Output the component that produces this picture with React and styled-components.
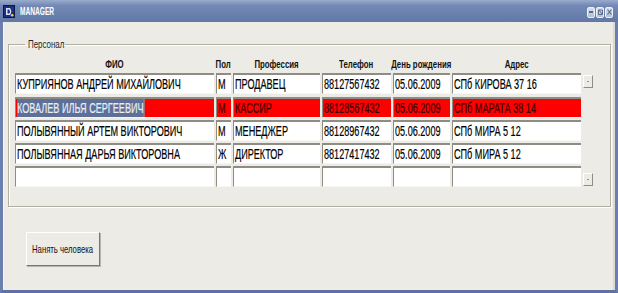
import React from 'react'
import styled, { createGlobalStyle } from 'styled-components'

const GlobalStyle = createGlobalStyle`
  html, body {
    margin: 0;
    padding: 0;
    background: #ecebe5;
  }
  body {
    font-family: "Liberation Sans", Arial, sans-serif;
  }
`

// the old form is drawn with a tall narrow face, so text is squeezed sideways
const Narrow = styled.span`
  display: inline-block;
  white-space: nowrap;
  transform: scaleX(${p => p.$scale || 0.7});
  transform-origin: ${p => p.$origin || 'left'} center;
`

const Window = styled.div`
  width: 618px;
  height: 293px;
  display: flex;
  flex-direction: column;
  overflow: hidden;
`

const TitleBar = styled.div`
  height: 22px;
  flex: none;
  display: flex;
  align-items: center;
  padding: 0 5px 0 3px;
  box-sizing: border-box;
  background: linear-gradient(#9aabcb 0%, #7489b5 25%, #687eac 70%, #6177a6 100%);
`

const TitleText = styled(Narrow)`
  margin-left: 5px;
  color: #fff;
  font-size: 11px;
  font-weight: bold;
`

const TitleButtons = styled.div`
  margin-left: auto;
  display: flex;
  gap: 1px;
  margin-top: 2px;
`

const TitleButton = styled.div`
  width: 8px;
  height: 11px;
  box-sizing: border-box;
  border: 1px solid #eef1f7;
  border-radius: 2px;
  background: linear-gradient(#d9dfeb, #b3bed4);
  display: flex;
  align-items: center;
  justify-content: center;
`

const Frame = styled.div`
  flex: 1;
  display: flex;
  flex-direction: column;
  align-items: flex-start;
  background: #ecebe5;
  border-left: 3px solid #6a7fad;
  border-right: 3px solid #6a7fad;
  border-bottom: 3px solid #5d72a2;
  box-shadow: inset 1px 0 #f6f5f0, inset -2px 0 #dcdbd3;
`

const Group = styled.fieldset`
  align-self: stretch;
  margin: 16px 4px 0 5px;
  padding: 7px 0 19px 6px;
  border: 1px solid #b1afa2;
  box-shadow: inset 1px 1px #fff, 1px 1px #fff;
  min-width: 0;
`

const Legend = styled.legend`
  margin-left: 10px;
  padding: 0 3px;
  width: 34px;
  font-size: 11px;
  line-height: 12px;
  color: #222;
`

const Grid = styled.div`
  display: grid;
  grid-template-columns: 199px 15px 87px 69px 57px 129px 10px;
  grid-template-rows: 14px repeat(5, 21px);
  column-gap: 2px;
  row-gap: 2.25px;
`

const Head = styled.div`
  display: flex;
  align-items: center;
  justify-content: center;
  white-space: nowrap;
  font-size: 11.5px;
  font-weight: bold;
  color: #111;
`

const Cell = styled.div`
  box-sizing: border-box;
  display: flex;
  align-items: stretch;
  padding-left: 1px;
  border-top: 2px solid #8d8c85;
  border-left: 1px solid #8d8c85;
  border-bottom: 1px solid #f7f6f2;
  background: ${p => (p.$red ? '#ff0000' : '#fff')};
  color: ${p => (p.$red ? '#3a0000' : '#000')};
  font-size: 14px;
  -webkit-text-stroke: 0.2px currentColor;
  overflow: hidden;
`

const CellText = styled(Narrow)`
  display: inline-flex;
  align-items: center;
  padding-right: ${p => (p.$selected ? '0' : '1px')};
  background: ${p => (p.$selected ? '#5e7098' : 'transparent')};
  color: ${p => (p.$selected ? '#e8eef6' : 'inherit')};
  border-right: ${p => (p.$selected ? '1px solid #74c2c6' : 'none')};
`

const ScrollCol = styled.div`
  grid-column: 7;
  grid-row: 2 / span 5;
  display: flex;
  flex-direction: column;
  justify-content: space-between;
  padding: 2px 0 1px;
`

const ScrollButton = styled.div`
  width: 10px;
  height: 13px;
  box-sizing: border-box;
  border-top: 1px solid #fff;
  border-left: 1px solid #fff;
  border-right: 1px solid #8f8d82;
  border-bottom: 1px solid #8f8d82;
  background: #ecebe5;
  display: flex;
  align-items: center;
  justify-content: center;
`

const Dot = styled.div`
  width: 2px;
  height: 1px;
  background: #9a988e;
`

const HireButton = styled.button`
  margin: 25px 0 0 23px;
  width: 74px;
  height: 34px;
  padding: 0;
  display: flex;
  align-items: center;
  justify-content: center;
  background: #ecebe5;
  border-top: 1px solid #fff;
  border-left: 1px solid #fff;
  border-right: 1px solid #7b796e;
  border-bottom: 1px solid #7b796e;
  box-shadow: 1px 1px #b8b6aa;
  font-family: "Liberation Sans", Arial, sans-serif;
  font-size: 11px;
  color: #111;
`

const columns = ['ФИО', 'Пол', 'Профессия', 'Телефон', 'День рождения', 'Адрес']

const people = [
  ['КУПРИЯНОВ АНДРЕЙ МИХАЙЛОВИЧ', 'М', 'ПРОДАВЕЦ', '88127567432', '05.06.2009', 'СПб КИРОВА 37 16'],
  ['КОВАЛЕВ ИЛЬЯ СЕРГЕЕВИЧ', 'М', 'КАССИР', '88128567432', '05.06.2009', 'СПб МАРАТА 38 14'],
  ['ПОЛЫВЯННЫЙ АРТЕМ ВИКТОРОВИЧ', 'М', 'МЕНЕДЖЕР', '88128967432', '05.06.2009', 'СПб МИРА 5 12'],
  ['ПОЛЫВЯННАЯ ДАРЬЯ ВИКТОРОВНА', 'Ж', 'ДИРЕКТОР', '88127417432', '05.06.2009', 'СПб МИРА 5 12'],
  ['', '', '', '', '', ''],
]

const AppIcon = () => (
  <svg width="12" height="13" viewBox="0 0 12 13">
    <rect x="0.5" y="0.5" width="11" height="12" fill="#1f2f7c" stroke="#0c1650" />
    <path d="M3 3 L7 3 Q9.5 6.5 7 10 L3 10 Z" fill="#d8e2ff" />
    <path d="M4.5 4.5 L6.3 4.5 Q7.6 6.5 6.3 8.5 L4.5 8.5 Z" fill="#1f2f7c" />
    <circle cx="9.2" cy="10.3" r="1.3" fill="#f2d23c" />
  </svg>
)

const App = () => {
  return (
    <Window>
      <GlobalStyle />
      <TitleBar>
        <AppIcon />
        <TitleText $scale={0.6}>MANAGER</TitleText>
        <TitleButtons>
          <TitleButton>
            <svg width="4" height="2"><rect width="4" height="2" fill="#5a6a8c" /></svg>
          </TitleButton>
          <TitleButton>
            <svg width="5" height="6" viewBox="0 0 5 6">
              <path d="M0.5 1 H4.5 V5.5 H0.5 Z" fill="none" stroke="#5a6a8c" strokeWidth="1" />
              <path d="M1 1 L4 5" stroke="#5a6a8c" strokeWidth="1" />
            </svg>
          </TitleButton>
          <TitleButton>
            <svg width="5" height="6" viewBox="0 0 5 6">
              <path d="M0.5 0.5 L4.5 5.5 M4.5 0.5 L0.5 5.5" stroke="#5a6a8c" strokeWidth="1.2" />
            </svg>
          </TitleButton>
        </TitleButtons>
      </TitleBar>
      <Frame>
        <Group>
          <Legend><Narrow $scale={0.72}>Персонал</Narrow></Legend>
          <Grid>
            {columns.map(c => (
              <Head key={c}><Narrow $scale={0.68} $origin="center">{c}</Narrow></Head>
            ))}
            <Head />
            {people.map((row, r) =>
              row.map((value, c) => (
                <Cell key={`${r}-${c}`} $red={r === 1} style={{ gridRow: r + 2, gridColumn: c + 1 }}>
                  {value && <CellText $scale={0.65} $selected={r === 1 && c === 0}>{value}</CellText>}
                </Cell>
              ))
            )}
            <ScrollCol>
              <ScrollButton><Dot /></ScrollButton>
              <ScrollButton><Dot /></ScrollButton>
            </ScrollCol>
          </Grid>
        </Group>
        <HireButton><Narrow $scale={0.7} $origin="center">Нанять человека</Narrow></HireButton>
      </Frame>
    </Window>
  )
}

export default App
